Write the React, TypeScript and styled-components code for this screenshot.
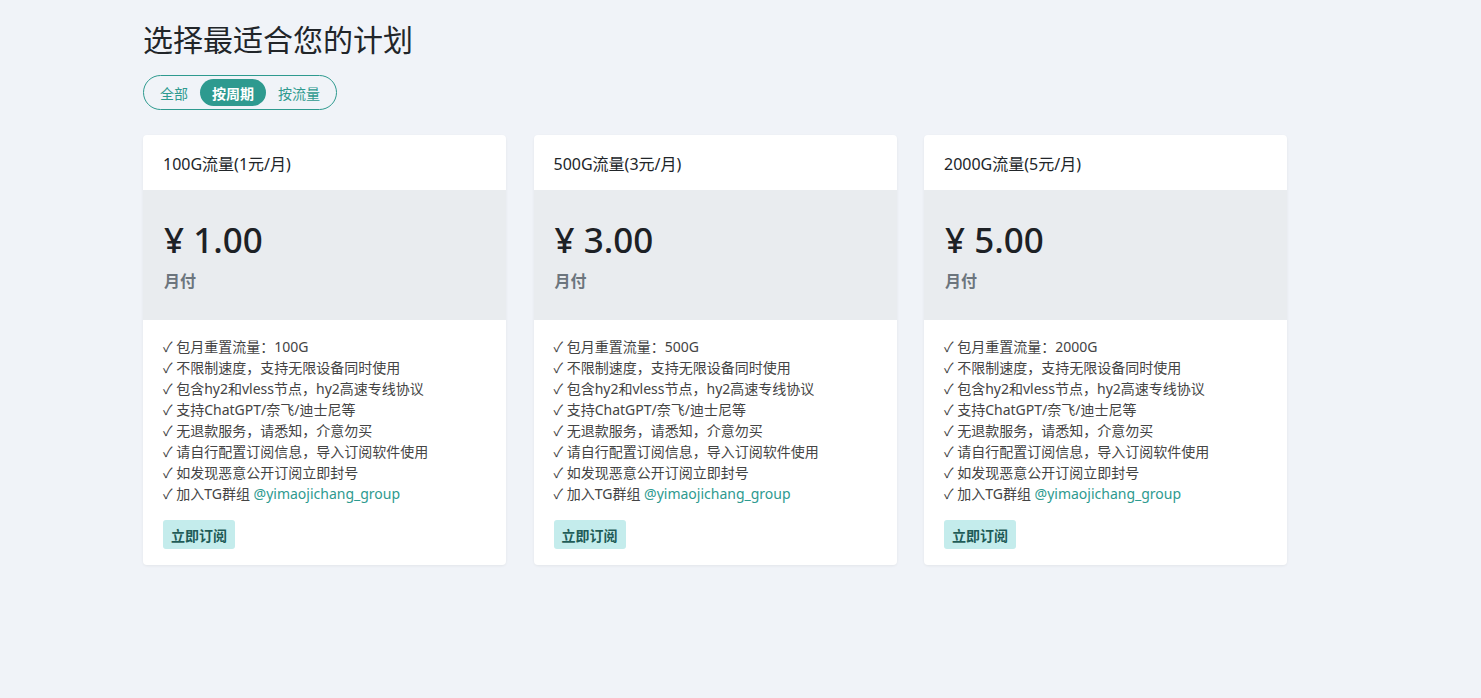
import styled, { createGlobalStyle } from 'styled-components';

const GlobalStyle = createGlobalStyle`
  body {
    margin: 0;
    background: #f0f3f8;
    font-family: "Noto Sans", "Noto Sans CJK SC", sans-serif;
    color: #212529;
  }
`;

const Page = styled.div`
  padding: 18px 0 40px 143px;
`;

const Title = styled.h1`
  margin: 0 0 13px;
  font-size: 30px;
  font-weight: 400;
  line-height: 44px;
  color: #212529;
`;

const Tabs = styled.div`
  display: inline-flex;
  align-items: center;
  padding: 3px 4px;
  border: 1px solid #2e9a8f;
  border-radius: 20px;
  margin-bottom: 25px;
`;

const Tab = styled.button<{ $active?: boolean }>`
  border: none;
  font-family: inherit;
  font-size: 14px;
  font-weight: ${p => (p.$active ? 700 : 400)};
  height: 27px;
  padding: 0 12px;
  border-radius: 14px;
  cursor: pointer;
  background: ${p => (p.$active ? '#2e9a8f' : 'transparent')};
  color: ${p => (p.$active ? '#fff' : '#2e9a8f')};
`;

const Grid = styled.div`
  display: grid;
  grid-template-columns: repeat(3, 363px);
  gap: 27.5px;
`;

const Card = styled.div`
  background: #fff;
  border-radius: 4px;
  box-shadow: 0 1px 3px rgba(0, 0, 0, 0.06);
  overflow: hidden;
`;

const CardHeader = styled.div`
  height: 55px;
  display: flex;
  align-items: center;
  padding: 0 20px;
  font-size: 16px;
  color: #212529;
`;

const PriceBox = styled.div`
  height: 130px;
  background: #e9ecef;
  padding: 0 21px;
  display: flex;
  flex-direction: column;
  justify-content: center;
`;

const Price = styled.div`
  font-size: 35px;
  font-weight: 500;
  line-height: 44px;
  color: #1d2125;
`;

const Period = styled.div`
  margin-top: 6px;
  font-size: 16px;
  font-weight: 700;
  color: #6c757d;
`;

const Body = styled.div`
  padding: 16px 20px 16px;
`;

const Feature = styled.div`
  font-size: 14px;
  line-height: 21px;
  color: #444;
`;

const Link = styled.a`
  color: #2e9a8f;
  text-decoration: none;
`;

const Subscribe = styled.button`
  margin-top: 16px;
  height: 29px;
  padding: 0 8px;
  border: none;
  border-radius: 3px;
  background: #c4ecec;
  color: #1f5c58;
  font-family: inherit;
  font-size: 14px;
  font-weight: 700;
  cursor: pointer;
`;

const plans = [
  { gb: '100G', price: '1', amount: '1.00' },
  { gb: '500G', price: '3', amount: '3.00' },
  { gb: '2000G', price: '5', amount: '5.00' },
];

export default function App() {
  return (
    <>
      <GlobalStyle />
      <Page>
        <Title>选择最适合您的计划</Title>
        <Tabs>
          <Tab>全部</Tab>
          <Tab $active>按周期</Tab>
          <Tab>按流量</Tab>
        </Tabs>
        <Grid>
          {plans.map(p => (
            <Card key={p.gb}>
              <CardHeader>{p.gb}流量({p.price}元/月)</CardHeader>
              <PriceBox>
                <Price>¥ {p.amount}</Price>
                <Period>月付</Period>
              </PriceBox>
              <Body>
                <Feature>✓ 包月重置流量：{p.gb}</Feature>
                <Feature>✓ 不限制速度，支持无限设备同时使用</Feature>
                <Feature>✓ 包含hy2和vless节点，hy2高速专线协议</Feature>
                <Feature>✓ 支持ChatGPT/奈飞/迪士尼等</Feature>
                <Feature>✓ 无退款服务，请悉知，介意勿买</Feature>
                <Feature>✓ 请自行配置订阅信息，导入订阅软件使用</Feature>
                <Feature>✓ 如发现恶意公开订阅立即封号</Feature>
                <Feature>
                  ✓ 加入TG群组 <Link href="#">@yimaojichang_group</Link>
                </Feature>
                <Subscribe>立即订阅</Subscribe>
              </Body>
            </Card>
          ))}
        </Grid>
      </Page>
    </>
  );
}
